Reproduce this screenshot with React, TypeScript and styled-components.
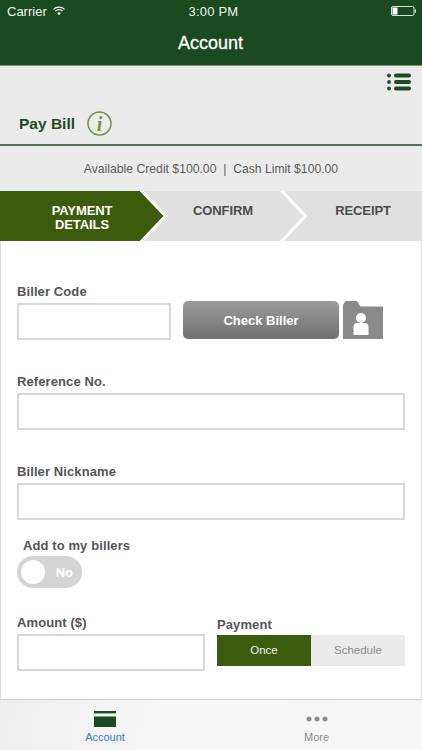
import React from "react";
import styled, { createGlobalStyle } from "styled-components";

const Global = createGlobalStyle`
  html, body { margin: 0; padding: 0; background: #fff; }
  * { box-sizing: border-box; }
  body { font-family: "Liberation Sans", Arial, sans-serif; }
`;

const Page = styled.div`
  width: 422px;
  height: 750px;
  display: flex;
  flex-direction: column;
  overflow: hidden;
`;

const Header = styled.header`
  height: 65px;
  background: #1a4a20;
  color: #fff;
  display: flex;
  flex-direction: column;
`;

const StatusBar = styled.div`
  height: 22px;
  padding: 0 6px 0 7px;
  display: grid;
  grid-template-columns: 1fr auto 1fr;
  align-items: center;
  font-size: 13px;
  color: #f1f5f1;
`;

const Carrier = styled.div`
  display: flex;
  align-items: center;
  gap: 6px;
`;

const Clock = styled.div`
  font-size: 13px;
  letter-spacing: 0.2px;
  margin-left: 4px;
`;

const BatteryBox = styled.div`
  justify-self: end;
  display: flex;
`;

const NavTitle = styled.div`
  flex: 1;
  display: flex;
  align-items: center;
  justify-content: center;
  font-size: 18px;
  -webkit-text-stroke: 0.3px #fff;
  padding-right: 1px;
`;

const TitleSection = styled.section`
  height: 81px;
  background: #ebebeb;
  border-top: 1px solid #7d957e;
  border-bottom: 2px solid #4f7052;
  display: flex;
  flex-direction: column;
`;

const MenuRow = styled.div`
  display: flex;
  justify-content: flex-end;
  padding: 7px 11px 0 0;
  height: 43px;
`;

const PayRow = styled.div`
  display: flex;
  align-items: center;
  gap: 12px;
  padding-left: 19px;
  height: 29px;
`;

const PayTitle = styled.h1`
  margin: 0;
  font-size: 15.5px;
  font-weight: 700;
  color: #1d4a22;
`;

const CreditRow = styled.div`
  height: 45px;
  background: #ebebeb;
  display: flex;
  align-items: center;
  justify-content: center;
  font-size: 12.2px;
  color: #5c5c5c;
`;

const Steps = styled.div`
  height: 50px;
  background: #e0e0e0;
  display: flex;
`;

const Step = styled.div<{ $w: number; $active?: boolean }>`
  position: relative;
  width: ${(p) => p.$w}px;
  flex: none;
  padding-top: 13px;
  text-align: center;
  font-size: 13px;
  line-height: 14px;
  font-weight: 700;
  letter-spacing: -0.1px;
  color: ${(p) => (p.$active ? "#fff" : "#4c4c4c")};
`;

const ActiveFill = styled.div`
  position: absolute;
  inset: 0;
  background: #3b5c0c;
  clip-path: polygon(0 0, 140px 0, 164px 25px, 140px 50px, 0 50px);
`;

const StepText = styled.span<{ $left?: number; $right?: number }>`
  position: relative;
  display: block;
  padding-left: ${(p) => p.$left ?? 0}px;
  padding-right: ${(p) => p.$right ?? 0}px;
`;

const ChevronSvg = styled.svg<{ $right: number }>`
  position: absolute;
  top: 0;
  right: ${(p) => p.$right}px;
`;

const Form = styled.main`
  flex: 1;
  background: #fff;
  border-left: 1px solid #dedede;
  border-right: 1px solid #dedede;
  padding: 42px 16px 0;
`;

const Label = styled.label<{ $indent?: number }>`
  display: block;
  height: 16px;
  line-height: 18px;
  font-size: 13px;
  letter-spacing: 0.1px;
  font-weight: 700;
  color: #555;
  margin-bottom: 4px;
  padding-left: ${(p) => p.$indent ?? 0}px;
`;

const TextInput = styled.input<{ $w?: number }>`
  display: block;
  width: ${(p) => (p.$w ? `${p.$w}px` : "100%")};
  height: 37px;
  background: #fff;
  border: 2px solid #d8d8d8;
  border-radius: 0;
  outline: none;
  padding: 0 6px;
`;

const BillerRow = styled.div`
  display: flex;
  align-items: flex-start;
`;

const CheckButton = styled.button`
  width: 156px;
  height: 38px;
  margin: 18px 3px 0 12px;
  border: none;
  border-radius: 5px;
  background: linear-gradient(#9c9c9c, #707070);
  color: #fff;
  font: 700 13px "Liberation Sans", Arial, sans-serif;
`;

const FolderSvg = styled.svg`
  margin-top: 18px;
  flex: none;
`;

const Field = styled.div<{ $top: number }>`
  margin-top: ${(p) => p.$top}px;
`;

const Switch = styled.div`
  position: relative;
  width: 65px;
  height: 32px;
  border-radius: 16px;
  background: #d4d4d4;
  margin-top: -1px;
  display: flex;
  align-items: center;
  justify-content: flex-end;
  padding-right: 9px;
  color: #fff;
  font-size: 13px;
  font-weight: 700;
`;

const Knob = styled.span`
  position: absolute;
  left: 4px;
  top: 4px;
  width: 24px;
  height: 24px;
  border-radius: 50%;
  background: #fff;
`;

const BottomRow = styled.div`
  margin-top: 26px;
  display: flex;
  gap: 12px;
`;

const PaymentCol = styled.div`
  flex: 1;
  padding-top: 2px;
`;

const Segments = styled.div`
  display: grid;
  grid-template-columns: 1fr 1fr;
  height: 31px;
  margin-top: -1px;
`;

const Segment = styled.div<{ $on?: boolean }>`
  display: flex;
  align-items: center;
  justify-content: center;
  font-size: 11.5px;
  background: ${(p) => (p.$on ? "#3b5c0c" : "#ebebeb")};
  color: ${(p) => (p.$on ? "#f3f3f3" : "#8a8a8a")};
  padding-bottom: 1px;
`;

const TabBar = styled.nav`
  height: 51px;
  flex: none;
  background: linear-gradient(100deg, #eeeeee, #f7f7f7 40%, #f6f6f6);
  border-top: 1px solid #cfcfcf;
  display: grid;
  grid-template-columns: 1fr 1fr;
`;

const Tab = styled.div<{ $on?: boolean; $shift?: number }>`
  display: flex;
  flex-direction: column;
  align-items: center;
  padding-top: 11px;
  padding-right: ${(p) => p.$shift ?? 0}px;
  font-size: 11px;
  color: ${(p) => (p.$on ? "#3a78d8" : "#8c8c8c")};
`;

const TabIcon = styled.svg`
  display: block;
  margin-bottom: 4px;
`;

const Chevron = ({ right }: { right: number }) => (
  <ChevronSvg $right={right} width="30" height="50" viewBox="0 0 30 50">
    <polyline points="1,-1 25.5,25 1,51" fill="none" stroke="#fff" strokeWidth="3" />
  </ChevronSvg>
);

export default function App() {
  return (
    <Page>
      <Global />
      <Header>
        <StatusBar>
          <Carrier>
            Carrier
            <svg width="12" height="10" viewBox="0 0 13 10">
              <path d="M0.5 3.2 A8.5 8.5 0 0 1 12.5 3.2" fill="none" stroke="#fff" strokeWidth="1.3" />
              <path d="M2.6 5.2 A5.6 5.6 0 0 1 10.4 5.2" fill="none" stroke="#fff" strokeWidth="1.3" />
              <path d="M4.5 7.2 A2.9 2.9 0 0 1 8.5 7.2 L6.5 9.6 Z" fill="#fff" />
            </svg>
          </Carrier>
          <Clock>3:00 PM</Clock>
          <BatteryBox>
            <svg width="25" height="10" viewBox="0 0 25 10">
              <rect x="0.5" y="0.5" width="22.5" height="9" rx="1.5" fill="none" stroke="#d9e2d9" strokeWidth="1" />
              <rect x="1.5" y="1.5" width="5" height="7" fill="#fff" />
              <rect x="23.8" y="3.4" width="1.2" height="3.2" fill="#d9e2d9" />
            </svg>
          </BatteryBox>
        </StatusBar>
        <NavTitle>Account</NavTitle>
      </Header>

      <TitleSection>
        <MenuRow>
          <svg width="24" height="18" viewBox="0 0 24 18" fill="#1d4a22">
            <circle cx="2" cy="2.5" r="1.9" />
            <circle cx="2" cy="9" r="1.9" />
            <circle cx="2" cy="15.5" r="1.9" />
            <rect x="7" y="0.5" width="17" height="4" rx="2" />
            <rect x="7" y="7" width="17" height="4" rx="2" />
            <rect x="7" y="13.5" width="17" height="4" rx="2" />
          </svg>
        </MenuRow>
        <PayRow>
          <PayTitle>Pay Bill</PayTitle>
          <svg width="25" height="25" viewBox="0 0 25 25">
            <circle cx="12.5" cy="12.5" r="11.5" fill="none" stroke="#6f9440" strokeWidth="1.5" />
            <text x="12.5" y="19.5" textAnchor="middle" fontFamily="Liberation Serif" fontStyle="italic" fontWeight="700" fontSize="20" fill="#6f9440">i</text>
          </svg>
        </PayRow>
      </TitleSection>

      <CreditRow>Available Credit $100.00&nbsp; |&nbsp; Cash Limit $100.00</CreditRow>

      <Steps>
        <Step $w={168} $active>
          <ActiveFill />
          <Chevron right={-2} />
          <StepText $right={4}>PAYMENT<br />DETAILS</StepText>
        </Step>
        <Step $w={116}>
          <StepText $right={6}>CONFIRM</StepText>
          <Chevron right={-26} />
        </Step>
        <Step $w={138}>
          <StepText $left={20}>RECEIPT</StepText>
        </Step>
      </Steps>

      <Form>
        <BillerRow>
          <div>
            <Label>Biller Code</Label>
            <TextInput $w={154} />
          </div>
          <CheckButton>Check Biller</CheckButton>
          <FolderSvg width="41" height="38" viewBox="0 0 41 38">
            <path d="M1 38 V4 L3.5 0 H15 L18.5 5.5 H41 V38 Z" fill="#8a8a8a" />
            <circle cx="19" cy="17" r="5" fill="#fff" />
            <path d="M11.5 34 V26 Q11.5 22 15.5 22 H22.5 Q26.5 22 26.5 26 V34 Z" fill="#fff" />
          </FolderSvg>
        </BillerRow>

        <Field $top={33}>
          <Label>Reference No.</Label>
          <TextInput />
        </Field>

        <Field $top={33}>
          <Label>Biller Nickname</Label>
          <TextInput />
        </Field>

        <Field $top={17}>
          <Label $indent={6}>Add to my billers</Label>
          <Switch>
            <Knob />
            No
          </Switch>
        </Field>

        <BottomRow>
          <div>
            <Label>Amount ($)</Label>
            <TextInput $w={188} />
          </div>
          <PaymentCol>
            <Label>Payment</Label>
            <Segments>
              <Segment $on>Once</Segment>
              <Segment>Schedule</Segment>
            </Segments>
          </PaymentCol>
        </BottomRow>
      </Form>

      <TabBar>
        <Tab $on $shift={1}>
          <TabIcon width="22" height="16" viewBox="0 0 22 16" fill="#1a4a20">
            <rect x="0" y="0" width="22" height="2.4" />
            <rect x="0" y="5.5" width="22" height="10.5" />
          </TabIcon>
          Account
        </Tab>
        <Tab>
          <TabIcon width="22" height="16" viewBox="0 0 22 16" fill="#909090">
            <circle cx="3" cy="8" r="2.5" />
            <circle cx="11" cy="8" r="2.5" />
            <circle cx="19" cy="8" r="2.5" />
          </TabIcon>
          More
        </Tab>
      </TabBar>
    </Page>
  );
}
